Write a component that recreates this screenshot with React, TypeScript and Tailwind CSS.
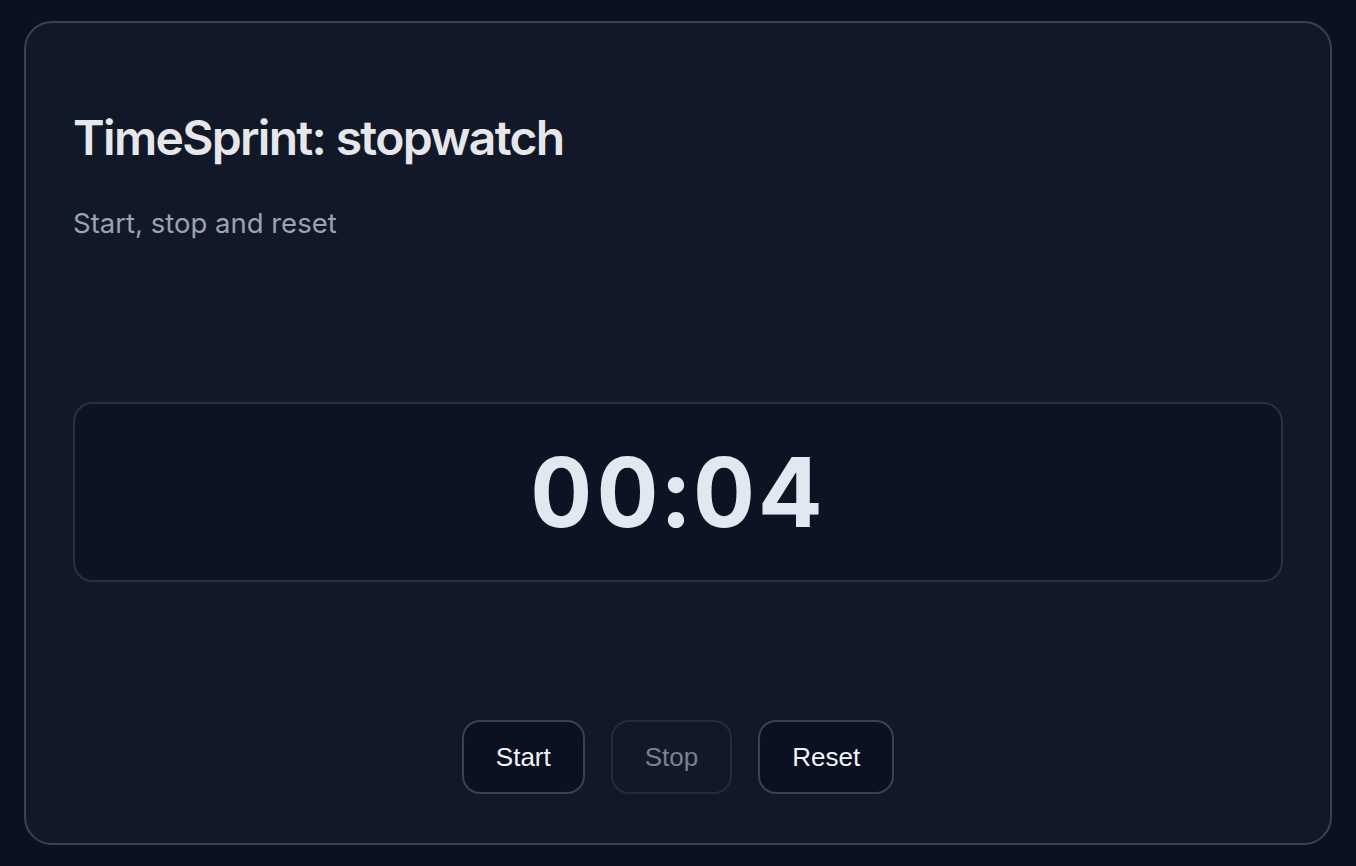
import React from "react";

export default function App() {
  return (
    <div className="flex h-[866px] w-full items-center bg-[#0b1120] px-6" style={{ fontFamily: "Inter, 'Noto Sans', sans-serif" }}>
      <div className="flex h-[824px] w-full flex-col rounded-[28px] border-2 border-[#394154] bg-[#111827] px-[47px] pb-12 pt-[85px]">
        <h1 className="text-[48px] font-semibold leading-[60px] tracking-[-0.035em] text-[#e5e7eb]">TimeSprint: stopwatch</h1>
        <p className="mt-[37px] text-[27.5px] leading-[36px] text-[#9ca3af]">Start, stop and reset</p>
        <div className="mt-[161px] flex h-[180px] items-center justify-center rounded-[20px] border-2 border-[#283042] bg-[#0d1322]">
          <span className="text-[96px] font-bold leading-none tabular-nums tracking-[0.045em] text-[#e2e8f0]">00:04</span>
        </div>
        <div className="mt-[138px] flex justify-center gap-[26px]" style={{ fontFamily: "'Liberation Sans', Arial, sans-serif" }}>
          <button className="h-[74px] rounded-[18px] border-2 border-[#394154] bg-[#0b1120] px-8 text-[26px] text-[#f1f5f9]">Start</button>
          <button disabled className="h-[74px] rounded-[18px] border-2 border-[#242c3c] bg-[#111827] px-8 text-[26px] text-[#7b818e]">Stop</button>
          <button className="h-[74px] rounded-[18px] border-2 border-[#394154] bg-[#0b1120] px-8 text-[26px] text-[#f1f5f9]">Reset</button>
        </div>
      </div>
    </div>
  );
}
